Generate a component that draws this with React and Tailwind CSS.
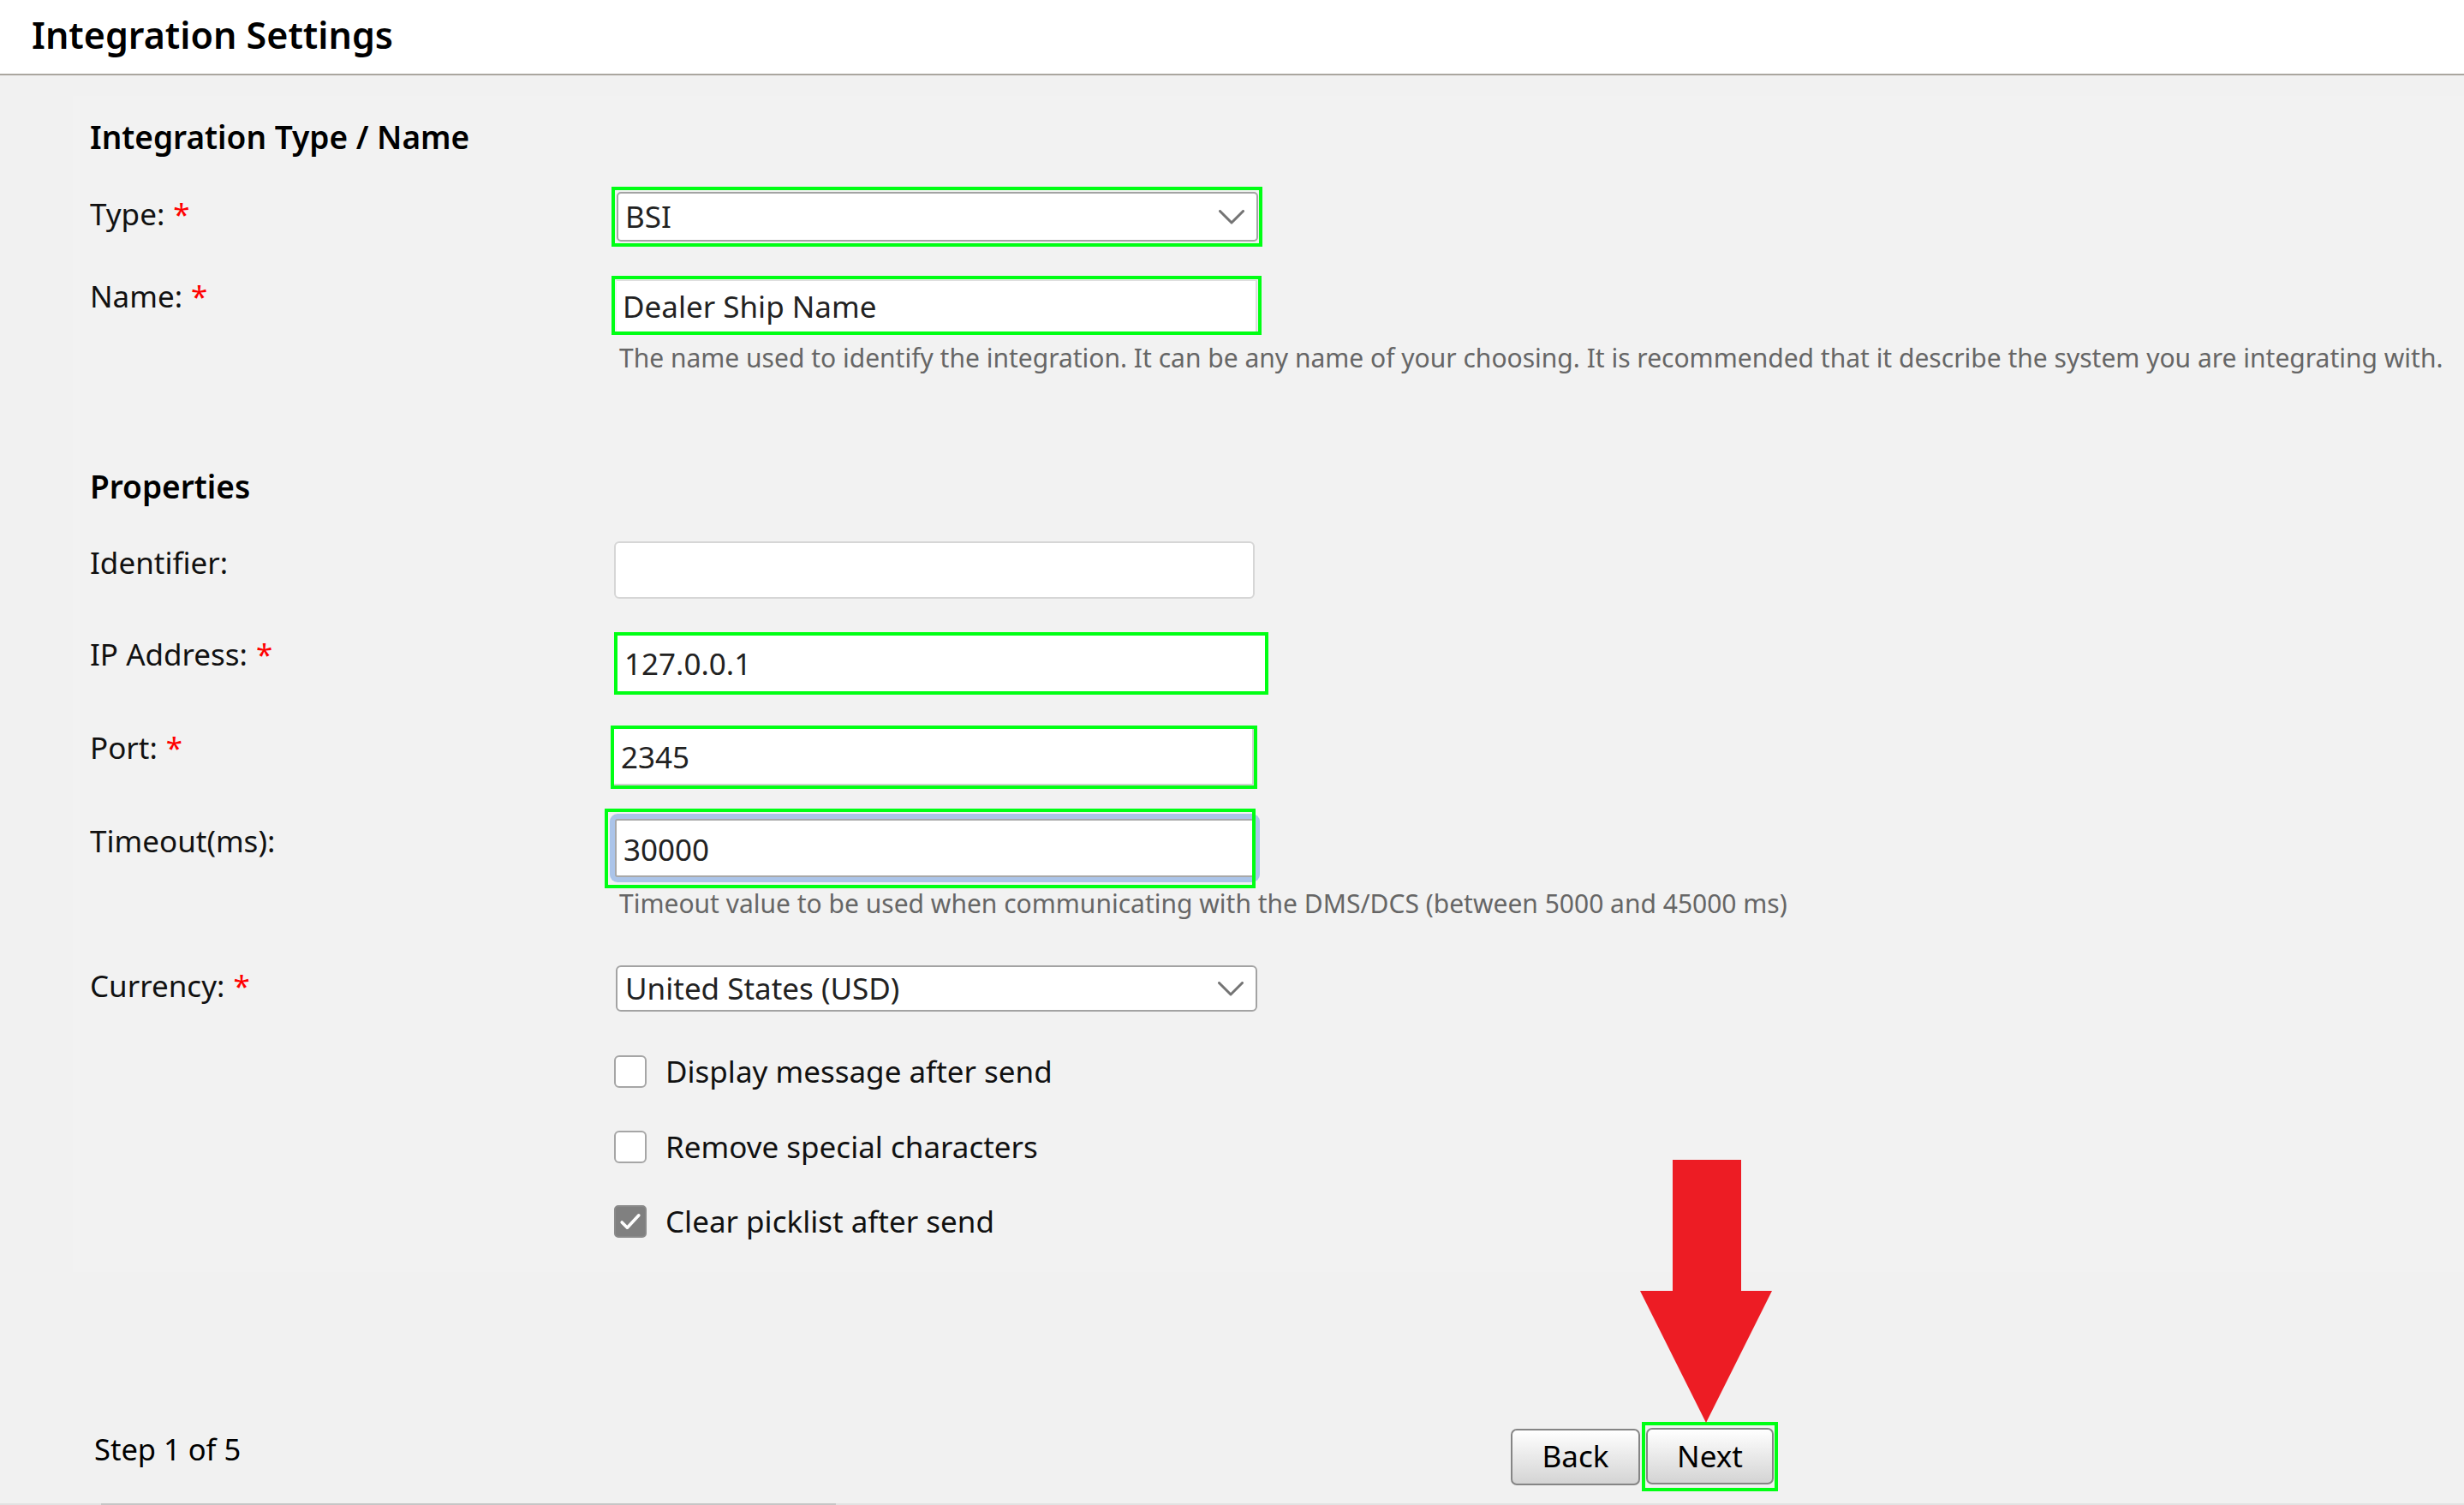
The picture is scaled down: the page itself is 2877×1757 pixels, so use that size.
import React from "react";

function Req() {
  return <span className="text-[#ff0000] ml-[10px]">*</span>;
}

function Chevron() {
  return (
    <svg width="30" height="17" viewBox="0 0 30 17" fill="none">
      <polyline points="1.5,1.5 15,15 28.5,1.5" stroke="#747474" strokeWidth="3" strokeLinejoin="round" strokeLinecap="round" />
    </svg>
  );
}

function Checkbox({ checked }) {
  if (checked) {
    return (
      <div className="w-[38px] h-[38px] rounded-[5px] bg-[#808080] border-2 border-[#8a8a8a] flex items-center justify-center">
        <svg width="38" height="38" viewBox="0 0 38 38" fill="none">
          <polyline points="8,20 15,27 30,11" stroke="#ffffff" strokeWidth="4" strokeLinecap="round" strokeLinejoin="round" />
        </svg>
      </div>
    );
  }
  return <div className="w-[38px] h-[38px] rounded-[6px] bg-white border-2 border-[#a6a6a6]" />;
}

function Row({ label, required, labelPad, children, className }) {
  return (
    <div className={"flex items-start " + className}>
      <div className={"w-[600px] shrink-0 leading-[48px] text-[#111] " + labelPad}>
        {label}
        {required && <Req />}
      </div>
      {children}
    </div>
  );
}

export default function App() {
  return (
    <div className="relative min-h-[1757px] h-[1757px] flex flex-col bg-[#f1f1f1] font-['Noto_Sans','Open_Sans',sans-serif] text-[35px] text-[#111] overflow-hidden">
      {/* header */}
      <div className="h-[88px] shrink-0 bg-white border-b-2 border-[#aaa69f] flex items-center pl-[37px]">
        <h1 className="text-[43px] font-semibold text-black leading-none -mt-[6px]">Integration Settings</h1>
      </div>

      {/* integration type / name */}
      <section className="mt-[24px] ml-[85px] bg-[#f2f2f2] pl-[20px] pt-[22px] pb-[80px]">
        <h2 className="text-[37px] font-semibold text-black leading-[52px]">Integration Type / Name</h2>

        <Row label="Type:" required labelPad="pt-[8px]" className="mt-[32px]">
          <div className="ml-[9px] w-[760px] h-[70px] border-4 border-[#00ff14] pt-[2px] pb-[2px] pl-[2px] pr-[1px]">
            <div className="h-full bg-white border-2 border-[#a3a3a3] rounded-[5px] flex items-center justify-between pl-[8px] pr-[14px]">
              <span className="text-[#222]">BSI</span>
              <Chevron />
            </div>
          </div>
        </Row>

        <Row label="Name:" required labelPad="pt-0" className="mt-[34px]">
          <div className="ml-[9px] w-[759px] h-[69px] border-4 border-[#00ff14] pt-[1px] pl-[2px] pr-px">
            <input
              readOnly
              value="Dealer Ship Name"
              className="w-full h-full bg-white border-t border-r-2 border-[#dddddd] pl-[7px] text-[#222] outline-none"
            />
          </div>
        </Row>

        <p className="mt-[7px] ml-[618px] text-[30px] leading-[40px] text-[#666] whitespace-nowrap">
          The name used to identify the integration. It can be any name of your choosing. It is recommended that it describe the system you are integrating with.
        </p>
      </section>

      {/* properties */}
      <section className="ml-[85px] bg-[#f2f2f2] pl-[20px] pt-[24px] pb-[40px]">
        <h2 className="text-[37px] font-semibold text-black leading-[52px]">Properties</h2>

        <Row label="Identifier:" labelPad="pt-px" className="mt-[38px]">
          <input
            readOnly
            value=""
            className="ml-[12px] w-[748px] h-[67px] bg-white border-2 border-[#d6d6d6] rounded-[6px] outline-none"
          />
        </Row>

        <Row label="IP Address:" required labelPad="pt-[2px]" className="mt-[39px]">
          <div className="ml-[12px] w-[764px] h-[73px] border-4 border-[#00ff14]">
            <input
              readOnly
              value="127.0.0.1"
              className="w-full h-full bg-white pl-[8px] text-[#222] outline-none"
            />
          </div>
        </Row>

        <Row label="Port:" required labelPad="pt-[2px]" className="mt-[36px]">
          <div className="ml-[8px] w-[755px] h-[74px] border-4 border-[#00ff14]">
            <input
              readOnly
              value="2345"
              className="w-full h-full bg-white border-r-2 border-b-2 border-[#d0d0d0] pl-[8px] text-[#222] outline-none"
            />
          </div>
        </Row>

        <Row label="Timeout(ms):" labelPad="pt-[14px]" className="mt-[23px]">
          <div className="relative ml-[1px] w-[760px] h-[93px]">
            <div className="mt-[6px] ml-[6px] w-[759px] h-[80px] rounded-[9px] bg-[#abc4e9] p-[6px]">
              <input
                readOnly
                value="30000"
                className="w-full h-full bg-white border-2 border-[#a8a8a8] rounded-[3px] pl-[8px] pt-[2px] text-[#222] outline-none"
              />
            </div>
            <div className="absolute inset-0 border-4 border-[#00ff14] pointer-events-none" />
          </div>
        </Row>

        <p className="-mt-[2px] ml-[618px] text-[30px] leading-[40px] text-[#666] whitespace-nowrap">
          Timeout value to be used when communicating with the DMS/DCS (between 5000 and 45000 ms)
        </p>

        <Row label="Currency:" required labelPad="pt-0" className="mt-[52px]">
          <div className="ml-[14px] w-[749px] h-[54px] bg-white border-2 border-[#a3a3a3] rounded-[6px] flex items-center justify-between pl-[9px] pr-[14px]">
            <span className="text-[#222]">United States (USD)</span>
            <Chevron />
          </div>
        </Row>

        <div className="ml-[612px] flex flex-col">
          <label className="mt-[51px] flex items-center gap-[22px] h-[38px]">
            <Checkbox />
            <span>Display message after send</span>
          </label>
          <label className="mt-[50px] flex items-center gap-[22px] h-[38px]">
            <Checkbox />
            <span>Remove special characters</span>
          </label>
          <label className="mt-[49px] flex items-center gap-[22px] h-[38px]">
            <Checkbox checked />
            <span>Clear picklist after send</span>
          </label>
        </div>
      </section>

      {/* footer */}
      <div className="mt-auto mb-[14px] w-[2076px] h-[81px] shrink-0 flex items-center justify-between pl-[110px]">
        <span className="text-[34.5px] text-black mb-[18px]">Step 1 of 5</span>
        <div className="flex items-center gap-[2px]">
          <button className="w-[151px] h-[66px] rounded-[7px] border-2 border-[#858585] bg-gradient-to-b from-white to-[#d4d4d4] text-black text-[35px]">
            Back
          </button>
          <div className="h-[81px] border-4 border-[#00ff14] pt-[3px] pb-[4px] px-px">
            <button className="w-[149px] h-[66px] rounded-[7px] border-2 border-[#858585] bg-gradient-to-b from-white to-[#d4d4d4] text-black text-[35px]">
              Next
            </button>
          </div>
        </div>
      </div>

      {/* scrollbar strip */}
      <div className="h-[2px] shrink-0 bg-[#e2e2e2] pl-[118px]">
        <div className="w-[858px] h-full bg-[#c6c6c6]" />
      </div>

      {/* annotation arrow */}
      <svg className="absolute left-[1915px] top-[1354px]" width="154" height="308" viewBox="0 0 154 308">
        <polygon points="38,0 118,0 118,153 154,153 77,307 0,153 38,153" fill="#ed1c24" />
      </svg>
    </div>
  );
}
